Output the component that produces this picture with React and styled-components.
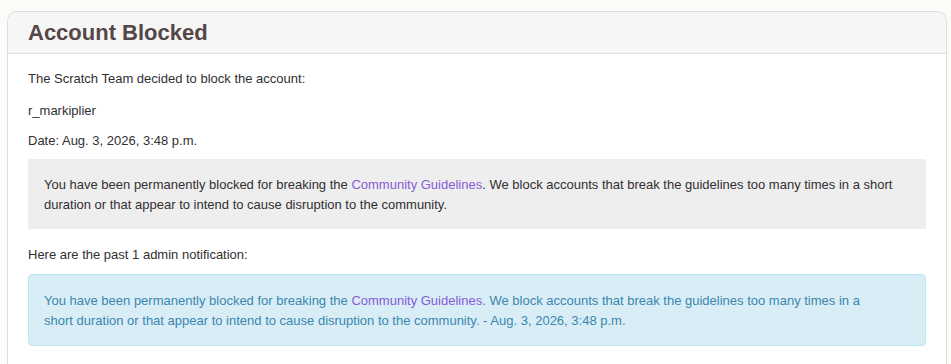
import React from "react";
import styled, { createGlobalStyle } from "styled-components";

const GlobalStyle = createGlobalStyle`
    body {
        margin: 0;
        background-color: #fcfbf8;
        font-family: "Liberation Sans", Arial, sans-serif;
    }
`

const Page = styled.div`
    padding: 11px 4px 0 7px;
`

const Card = styled.section`
    border: 1px solid #dedede;
    border-bottom: none;
    border-radius: 10px 10px 0 0;
    background-color: #fff;
    min-height: 360px;
`

const Header = styled.div`
    background-color: #f6f6f6;
    border-bottom: 1px solid #dedede;
    border-radius: 10px 10px 0 0;
    padding: 0 20px;
    height: 41px;
    display: flex;
    align-items: center;

    & h1 {
        margin: 1px 0 0;
        font-size: 22px;
        font-weight: bold;
        color: #554747;
    }
`

const Body = styled.div`
    padding: 15px 20px 20px;
    color: #322f31;
    font-size: 13px;
    line-height: 20px;

    & p {
        margin: 0 0 12px;
    }

    & p.date {
        margin-top: -2px;
    }
`

const Notice = styled.div`
    padding: ${props => props.info ? "16px 15px 14px" : "15px 15px 13px"};
    line-height: 20px;
    background-color: ${props => props.info ? "#d9edf7" : "#eeeeee"};
    color: ${props => props.info ? "#3a87ad" : "#322f31"};
    border: 1px solid ${props => props.info ? "#bce8f1" : "#eeeeee"};
    border-radius: ${props => props.info ? "4px" : "0"};
    margin-top: ${props => props.info ? "-3px" : "-4px"};
    margin-bottom: ${props => props.info ? "0" : "16px"};
`

const Link = styled.a`
    color: #855cd6;
    text-decoration: none;
`

export default function App() {
    const date = "Aug. 3, 2026, 3:48 p.m."

    return (
        <>
            <GlobalStyle />
            <Page>
                <Card>
                    <Header>
                        <h1>Account Blocked</h1>
                    </Header>
                    <Body>
                        <p>The Scratch Team decided to block the account:</p>
                        <p>r_markiplier</p>
                        <p className="date">Date: {date}</p>
                        <Notice>
                            You have been permanently blocked for breaking the <Link href="#">Community Guidelines</Link>. We block accounts that break the guidelines too many times in a short duration or that appear to intend to cause disruption to the community.
                        </Notice>
                        <p>Here are the past 1 admin notification:</p>
                        <Notice info>
                            You have been permanently blocked for breaking the <Link href="#">Community Guidelines</Link>. We block accounts that break the guidelines too many times in a<br />
                            short duration or that appear to intend to cause disruption to the community. - {date}
                        </Notice>
                    </Body>
                </Card>
            </Page>
        </>
    )
}
